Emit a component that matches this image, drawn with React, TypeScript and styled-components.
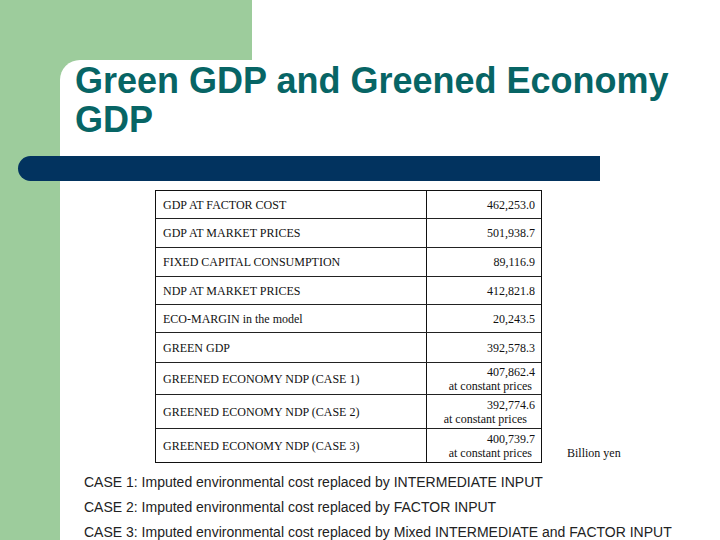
import React from "react";
import styled, { createGlobalStyle } from "styled-components";

const GREEN = "#9dcc9c";
const NAVY = "#02335f";
const TEAL = "#076565";

const Global = createGlobalStyle`
  html, body {
    margin: 0;
    padding: 0;
    background: #ffffff;
  }
  body {
    width: 720px;
    height: 540px;
    overflow: hidden;
  }
`;

const Slide = styled.div`
  width: 720px;
  height: 540px;
  display: flex;
  flex-direction: column;
  background: #ffffff;
  overflow: hidden;
`;

const TopBand = styled.div`
  height: 60px;
  flex-shrink: 0;
  display: flex;
`;

const GreenBlock = styled.div`
  width: 252px;
  background: ${GREEN};
`;

const Lower = styled.div`
  flex: 1;
  min-height: 0;
  overflow: hidden;
  display: grid;
  grid-template-columns: 60px 1fr;
  grid-template-rows: 96px 25px 1fr;
  background: ${GREEN};
`;

const Panel = styled.div`
  grid-column: 2;
  grid-row: 1 / -1;
  background: #ffffff;
  border-top-left-radius: 20px;
`;

const Title = styled.h1`
  grid-column: 2;
  grid-row: 1;
  margin: 0;
  padding: 1px 0 0 15px;
  font-family: "Liberation Sans", Arial, sans-serif;
  font-weight: bold;
  font-size: 36px;
  line-height: 39px;
  color: ${TEAL};
  z-index: 1;
`;

const Bar = styled.div`
  grid-column: 1 / -1;
  grid-row: 2;
  margin-left: 18px;
  width: 582px;
  height: 25px;
  background: ${NAVY};
  border-radius: 12.5px 0 0 12.5px;
  z-index: 1;
`;

const Content = styled.div`
  grid-column: 2;
  grid-row: 3;
  z-index: 1;
  display: flex;
  flex-direction: column;
`;

const TableRow = styled.div`
  display: flex;
  align-items: flex-end;
  margin: 9px 0 0 95px;
`;

const Table = styled.div`
  width: 385px;
  border: 1px solid #111;
  display: flex;
  flex-direction: column;
  font-family: "Liberation Serif", "Times New Roman", serif;
  font-size: 12px;
  color: #111;
`;

const Row = styled.div<{ $h: number; $last?: boolean }>`
  height: ${(p) => p.$h - (p.$last ? 0 : 1)}px;
  display: grid;
  grid-template-columns: 271px 1fr;
  border-bottom: ${(p) => (p.$last ? "none" : "1px solid #222")};
`;

const Label = styled.div`
  display: flex;
  align-items: center;
  padding-left: 7px;
  border-right: 1px solid #111;
  line-height: 14px;
`;

const Value = styled.div`
  display: flex;
  flex-direction: column;
  justify-content: center;
  align-items: flex-end;
  padding-right: 6px;
  line-height: 14px;
`;

const Sub = styled.span<{ $pad: number }>`
  padding-right: ${(p) => p.$pad}px;
`;

const Unit = styled.div`
  margin: 0 0 3px 25px;
  font-family: "Liberation Serif", "Times New Roman", serif;
  font-size: 12px;
  line-height: 14px;
  color: #111;
`;

const Notes = styled.div`
  margin: 7px 0 0 24px;
  font-family: "Liberation Sans", Arial, sans-serif;
  font-size: 14px;
  line-height: 25px;
  color: #222;
  white-space: nowrap;
`;

type Item = { label: string; value: string; h: number; sub?: number };

const rows: Item[] = [
  { label: "GDP AT FACTOR COST", value: "462,253.0", h: 28 },
  { label: "GDP AT MARKET PRICES", value: "501,938.7", h: 29 },
  { label: "FIXED CAPITAL CONSUMPTION", value: "89,116.9", h: 29 },
  { label: "NDP AT MARKET PRICES", value: "412,821.8", h: 28 },
  { label: "ECO-MARGIN in the model", value: "20,243.5", h: 28 },
  { label: "GREEN GDP", value: "392,578.3", h: 30 },
  { label: "GREENED ECONOMY NDP (CASE 1)", value: "407,862.4", h: 32, sub: 3 },
  { label: "GREENED ECONOMY NDP (CASE 2)", value: "392,774.6", h: 34, sub: 8 },
  { label: "GREENED ECONOMY NDP (CASE 3)", value: "400,739.7", h: 33, sub: 3 },
];

export default function App() {
  return (
    <Slide>
      <Global />
      <TopBand>
        <GreenBlock />
      </TopBand>
      <Lower>
        <Panel />
        <Title>
          Green GDP and Greened Economy
          <br />
          GDP
        </Title>
        <Bar />
        <Content>
          <TableRow>
            <Table>
              {rows.map((r, i) => (
                <Row key={r.label} $h={r.h} $last={i === rows.length - 1}>
                  <Label>{r.label}</Label>
                  <Value>
                    <span>{r.value}</span>
                    {r.sub !== undefined && <Sub $pad={r.sub}>at constant prices</Sub>}
                  </Value>
                </Row>
              ))}
            </Table>
            <Unit>Billion yen</Unit>
          </TableRow>
          <Notes>
            <div>CASE 1: Imputed environmental cost replaced by INTERMEDIATE INPUT</div>
            <div>CASE 2: Imputed environmental cost replaced by FACTOR INPUT</div>
            <div>CASE 3: Imputed environmental cost replaced by Mixed INTERMEDIATE and FACTOR INPUT</div>
          </Notes>
        </Content>
      </Lower>
    </Slide>
  );
}
